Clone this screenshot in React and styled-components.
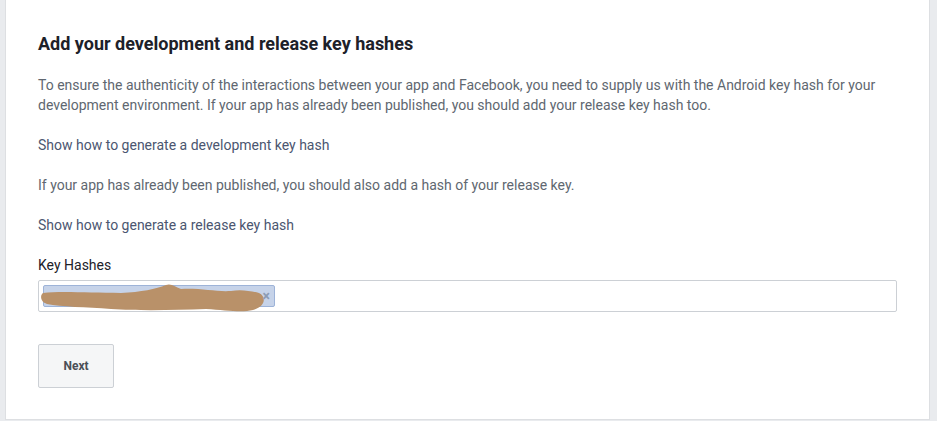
import React from 'react'
import styled, { createGlobalStyle } from 'styled-components'

const Global = createGlobalStyle`
  html, body {
    margin: 0;
    padding: 0;
    background: #e9ebee;
  }
  body {
    font-family: Roboto, "Liberation Sans", Arial, sans-serif;
  }
`

const Page = styled.div`
  width: 937px;
  height: 421px;
  overflow: hidden;
  padding: 0 7px 0 5px;
  box-sizing: border-box;
`

const Card = styled.div`
  background: #fff;
  border: 1px solid #dddfe2;
  border-top: none;
  padding: 33px 32px 31px 32px;
  height: 420px;
  box-sizing: border-box;
`

const Heading = styled.h2`
  margin: 0 0 20px;
  font-size: 18px;
  line-height: 22px;
  font-weight: 700;
  color: #1d2129;
`

const Text = styled.p`
  margin: 0 0 20px;
  font-size: 14px;
  line-height: 20px;
  color: #606770;
`

const LinkText = styled.a`
  display: block;
  margin: 0 0 20px;
  font-size: 14px;
  line-height: 20px;
  color: #4b5670;
  text-decoration: none;
  cursor: pointer;
`

const Label = styled.div`
  font-size: 14px;
  line-height: 20px;
  color: #1d2129;
  margin-bottom: 5px;
`

const TokenInput = styled.div`
  display: flex;
  align-items: center;
  height: 32px;
  box-sizing: border-box;
  border: 1px solid #ccd0d5;
  border-radius: 2px;
  padding: 0 4px;
  background: #fff;
`

const Token = styled.span`
  position: relative;
  display: flex;
  align-items: center;
  justify-content: flex-end;
  width: 232px;
  height: 22px;
  box-sizing: border-box;
  background: #c6d3e9;
  border: 1px solid #9db3d8;
  border-radius: 2px;
  padding: 0 4px;
  font-size: 12px;
  color: #4b4f56;
`

const Remove = styled.span`
  position: relative;
  z-index: 2;
  font-size: 14px;
  font-weight: 700;
  color: #8d9bb3;
  line-height: 1;
`

const Scribble = styled.svg`
  position: absolute;
  left: -3px;
  top: -3px;
  z-index: 1;
`

const Button = styled.button`
  margin-top: 32px;
  width: 76px;
  height: 44px;
  background: #f5f6f7;
  border: 1px solid #ccd0d5;
  border-radius: 2px;
  font-family: Roboto, "Liberation Sans", Arial, sans-serif;
  font-size: 12px;
  font-weight: 700;
  color: #4b4f56;
  cursor: pointer;
`

export default function App() {
  return (
    <Page>
      <Global />
      <Card>
        <Heading>Add your development and release key hashes</Heading>
        <Text>
          To ensure the authenticity of the interactions between your app and Facebook, you need to supply us with the Android key hash for your development environment. If your app has already been published, you should add your release key hash too.
        </Text>
        <LinkText>Show how to generate a development key hash</LinkText>
        <Text>If your app has already been published, you should also add a hash of your release key.</Text>
        <LinkText>Show how to generate a release key hash</LinkText>
        <Label>Key Hashes</Label>
        <TokenInput>
          <Token>
            <Scribble width="225" height="30" viewBox="0 0 225 30">
              <path
                d="M2 10 C 20 8, 50 10, 80 10 C 100 9, 115 6, 125 2 C 130 0, 135 4, 140 6 C 160 5, 175 9, 190 8 C 200 6, 210 8, 218 10 C 226 14, 224 24, 212 27 C 200 30, 185 27, 165 26 C 135 27, 100 28, 70 26 C 45 24, 20 24, 6 21 C -1 19, -1 12, 2 10 Z"
                fill="#b99169"
              />
            </Scribble>
            <Remove>×</Remove>
          </Token>
        </TokenInput>
        <Button>Next</Button>
      </Card>
    </Page>
  )
}
